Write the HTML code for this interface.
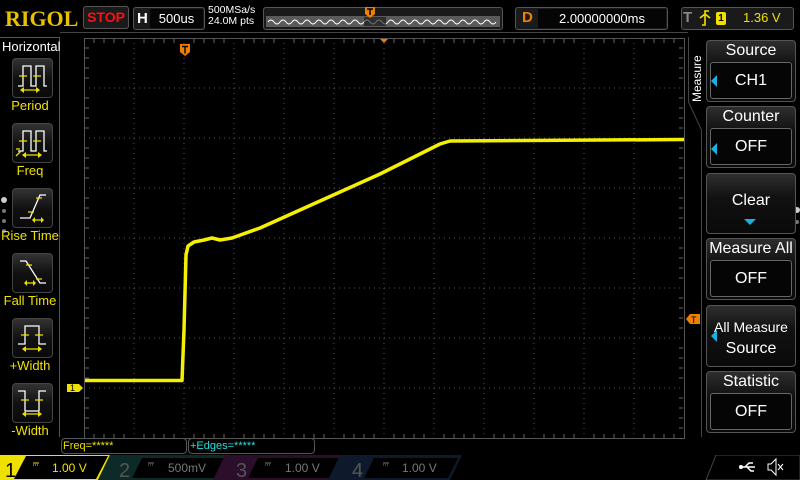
<!DOCTYPE html>
<html><head><meta charset="utf-8"><style>
*{margin:0;padding:0;box-sizing:border-box}
body{width:800px;height:480px;background:#000;overflow:hidden;position:relative;font-family:"Liberation Sans",sans-serif;color:#fff}
.a{position:absolute}
.btn{position:absolute;left:706px;width:90px;border:1px solid #555;border-radius:4px;background:linear-gradient(#2e2e2e,#111 40%,#0a0a0a)}
.btn .t{text-align:center;font-size:16px;color:#fff;height:20px;line-height:20px}
.btn .in{position:absolute;left:3px;right:3px;border:1px solid #666;border-radius:3px;background:#050505;text-align:center;font-size:16px;line-height:36px}
.tri{position:absolute;left:4px;width:0;height:0;border-top:6px solid transparent;border-bottom:6px solid transparent;border-right:6px solid #1ab0e0}
.ic{position:absolute;left:12px;width:41px;height:40px;border:1px solid #444;border-radius:4px;background:linear-gradient(#333,#111 50%,#0a0a0a)}
.lb{position:absolute;left:0;width:60px;text-align:center;color:#f0e000;font-size:13px}
</style></head><body>
<!-- top bar -->
<div class="a" style="left:5px;top:6px;font-family:'Liberation Serif',serif;font-weight:bold;font-size:22px;color:#e8c000">RIGOL</div>
<div class="a" style="left:83px;top:6px;width:46px;height:23px;border:1px solid #555;border-radius:3px;background:#1a1a1a;color:#ff1010;font-weight:bold;font-size:14px;text-align:center;line-height:21px">STOP</div>
<div class="a" style="left:133px;top:7px;width:72px;height:23px;border:1px solid #555;border-radius:3px;background:#1a1a1a"></div>
<div class="a" style="left:137px;top:10px;font-weight:bold;font-size:15px">H</div>
<div class="a" style="left:150px;top:9px;width:53px;height:19px;background:#050505;border-radius:2px;font-size:13px;text-align:center;line-height:19px">500us</div>
<div class="a" style="left:208px;top:5px;font-size:10.5px;line-height:11px">500MSa/s<br>24.0M pts</div>
<div class="a" style="left:263px;top:7px;width:240px;height:23px;border:1px solid #555;border-radius:3px;background:#1a1a1a"></div>
<svg class="a" style="left:266px;top:16px" width="234" height="12"><rect width="234" height="11" fill="#5a5a5a"/><path d="M2 6 q3 -4 6 0 t6 0 t6 0 t6 0 t6 0 t6 0 t6 0 t6 0 t6 0 t6 0 t6 0 t6 0 t6 0 t6 0 t6 0 t6 0 t6 0 t6 0 t6 0 t6 0 t6 0 t6 0 t6 0 t6 0 t6 0 t6 0 t6 0 t6 0 t6 0 t6 0 t6 0 t6 0 t6 0 t6 0 t6 0 t6 0 t6 0 t6 0" stroke="#fff" fill="none" stroke-width="1"/><rect x="98" y="1" width="22" height="9" fill="#111" opacity=".6"/></svg>
<svg class="a" style="left:365px;top:7px" width="10" height="11"><path d="M0 0h10v7l-5 4-5-4z" fill="#f08000"/><path d="M2 2h6M5 2v6" stroke="#000" stroke-width="1.5"/></svg>
<div class="a" style="left:515px;top:7px;width:153px;height:23px;border:1px solid #555;border-radius:3px;background:#1a1a1a"></div>
<div class="a" style="left:522px;top:9px;font-weight:bold;font-size:15px;color:#f08000">D</div>
<div class="a" style="left:538px;top:9px;width:128px;height:19px;background:#050505;font-size:13px;text-align:center;line-height:19px">2.00000000ms</div>
<div class="a" style="left:681px;top:7px;width:113px;height:23px;border:1px solid #555;border-radius:3px;background:#1a1a1a"></div>
<div class="a" style="left:683px;top:9px;font-weight:bold;font-size:15px;color:#888">T</div>
<svg class="a" style="left:699px;top:10px" width="12" height="16"><path d="M3 15H6V1H10M1 8l5-4 5 4" stroke="#f0e000" stroke-width="1.6" fill="none"/></svg>
<div class="a" style="left:716px;top:12px;width:10px;height:13px;background:#f0e000;border-radius:2px;color:#000;font-size:10px;text-align:center;line-height:13px;font-weight:bold">1</div>
<div class="a" style="left:743px;top:10px;font-size:13px;color:#f0e000">1.36 V</div>
<!-- frames -->
<div class="a" style="left:0;top:37px;width:60px;height:1px;background:#555"></div>
<div class="a" style="left:59px;top:37px;width:1px;height:400px;background:#555"></div>
<div class="a" style="left:60px;top:32px;width:628px;height:1px;background:#444"></div>
<!-- plot -->
<svg class="a" style="left:0;top:0" width="800" height="480">
<g stroke="#555" stroke-dasharray="1 4">
<path d="M134 38v400M184 38v400M234 38v400M284 38v400M334 38v400M384 38v400M434 38v400M484 38v400M534 38v400M584 38v400M634 38v400"/>
<path d="M84 88h600M84 138h600M84 188h600M84 238h600M84 288h600M84 338h600M84 388h600"/>
</g>
<rect x="84.5" y="38.5" width="600" height="400" fill="none" stroke="#555"/>
<path d="M94 39v4M104 39v4M114 39v4M124 39v4M144 39v4M154 39v4M164 39v4M174 39v4M194 39v4M204 39v4M214 39v4M224 39v4M244 39v4M254 39v4M264 39v4M274 39v4M294 39v4M304 39v4M314 39v4M324 39v4M344 39v4M354 39v4M364 39v4M374 39v4M394 39v4M404 39v4M414 39v4M424 39v4M444 39v4M454 39v4M464 39v4M474 39v4M494 39v4M504 39v4M514 39v4M524 39v4M544 39v4M554 39v4M564 39v4M574 39v4M594 39v4M604 39v4M614 39v4M624 39v4M644 39v4M654 39v4M664 39v4M674 39v4M94 438v-4M104 438v-4M114 438v-4M124 438v-4M144 438v-4M154 438v-4M164 438v-4M174 438v-4M194 438v-4M204 438v-4M214 438v-4M224 438v-4M244 438v-4M254 438v-4M264 438v-4M274 438v-4M294 438v-4M304 438v-4M314 438v-4M324 438v-4M344 438v-4M354 438v-4M364 438v-4M374 438v-4M394 438v-4M404 438v-4M414 438v-4M424 438v-4M444 438v-4M454 438v-4M464 438v-4M474 438v-4M494 438v-4M504 438v-4M514 438v-4M524 438v-4M544 438v-4M554 438v-4M564 438v-4M574 438v-4M594 438v-4M604 438v-4M614 438v-4M624 438v-4M644 438v-4M654 438v-4M664 438v-4M674 438v-4" stroke="#666"/>
<path d="M85 48h4M85 58h4M85 68h4M85 78h4M85 98h4M85 108h4M85 118h4M85 128h4M85 148h4M85 158h4M85 168h4M85 178h4M85 198h4M85 208h4M85 218h4M85 228h4M85 248h4M85 258h4M85 268h4M85 278h4M85 298h4M85 308h4M85 318h4M85 328h4M85 348h4M85 358h4M85 368h4M85 378h4M85 398h4M85 408h4M85 418h4M85 428h4M683 48h-4M683 58h-4M683 68h-4M683 78h-4M683 98h-4M683 108h-4M683 118h-4M683 128h-4M683 148h-4M683 158h-4M683 168h-4M683 178h-4M683 198h-4M683 208h-4M683 218h-4M683 228h-4M683 248h-4M683 258h-4M683 268h-4M683 278h-4M683 298h-4M683 308h-4M683 318h-4M683 328h-4M683 348h-4M683 358h-4M683 368h-4M683 378h-4M683 398h-4M683 408h-4M683 418h-4M683 428h-4" stroke="#666"/>
<!-- waveform -->
<path d="M85 380.5H182L184 330L186 255L188 246L194 242L204 240L212 238L220 240L232 238L260 228L300 210L340 192L380 174L420 154L440 144L450 141L684 139.5" fill="none" stroke="#f4f000" stroke-width="3.5" stroke-linejoin="round"/>
<!-- markers -->
<path d="M180 44h10v8l-5 4-5-4z" fill="#f08000"/><path d="M182 46.5h6M185 46.5v7" stroke="#000" stroke-width="1.4"/>
<path d="M380 39h8l-4 4z" fill="#f08000"/>
<path d="M67 384h12l4 4-4 4h-12z" fill="#f0e000"/><text x="70" y="391" font-size="9" font-family="Liberation Sans" fill="#000">1</text>
<path d="M700 314h-10l-4 5 4 5h10z" fill="#f08000"/><text x="691" y="323" font-size="9" font-family="Liberation Sans" fill="#000">T</text>
<!-- right panel bracket -->
<path d="M688.5 37V102L701.5 130V437" stroke="#444" fill="none"/>
<circle cx="797" cy="210" r="3" fill="#ccc"/><circle cx="797" cy="222" r="2" fill="#777"/>
<circle cx="4" cy="200" r="3" fill="#ccc"/><circle cx="4" cy="211" r="2" fill="#777"/><circle cx="4" cy="221" r="2" fill="#777"/><circle cx="4" cy="231" r="2" fill="#777"/>
</svg>
<div class="a" style="left:2px;top:39px;font-size:13px">Horizontal</div>
<!-- left icons -->
<div class="ic" style="top:58px"></div>
<svg class="a" style="left:12px;top:58px" width="41" height="40"><g stroke="#fff" fill="none" stroke-width="1.3"><path d="M6 28h5V8h8v20h5V8h8v20h3"/></g><g stroke="#f0e000" stroke-width="1.3"><path d="M7 18h8M21 18h8M10 32h16"/></g><path d="M8 32l4-3v6zM28 32l-4-3v6z" fill="#f0e000"/></svg>
<div class="lb" style="top:98px">Period</div>
<div class="ic" style="top:123px"></div>
<svg class="a" style="left:12px;top:123px" width="41" height="40"><g stroke="#fff" fill="none" stroke-width="1.3"><path d="M6 28h5V8h8v20h5V8h8v20h3"/></g><g stroke="#f0e000" stroke-width="1.3"><path d="M7 18h8M21 18h8M12 32h16M4 26h4M4 33l5-5"/></g><path d="M10 32l4-3v6zM30 32l-4-3v6z" fill="#f0e000"/></svg>
<div class="lb" style="top:163px">Freq</div>
<div class="ic" style="top:188px"></div>
<svg class="a" style="left:12px;top:188px" width="41" height="40"><g stroke="#fff" fill="none" stroke-width="1.3"><path d="M8 30h10l10-23h6"/></g><g stroke="#f0e000" stroke-width="1.3"><path d="M16 24h6M24 10h6M22 32h8"/></g><path d="M20 32l3-3v6zM32 32l-3-3v6z" fill="#f0e000"/></svg>
<div class="lb" style="top:228px">Rise Time</div>
<div class="ic" style="top:253px"></div>
<svg class="a" style="left:12px;top:253px" width="41" height="40"><g stroke="#fff" fill="none" stroke-width="1.3"><path d="M8 8h6l14 22h6"/></g><g stroke="#f0e000" stroke-width="1.3"><path d="M14 12h6M24 26h6M14 30h8"/></g><path d="M12 30l3-3v6zM24 30l-3-3v6z" fill="#f0e000"/></svg>
<div class="lb" style="top:293px">Fall Time</div>
<div class="ic" style="top:318px"></div>
<svg class="a" style="left:12px;top:318px" width="41" height="40"><g stroke="#fff" fill="none" stroke-width="1.3"><path d="M6 26h7V8h14v18h7"/></g><g stroke="#f0e000" stroke-width="1.3"><path d="M9 17h8M23 17h8M12 31h16"/></g><path d="M10 31l4-3v6zM30 31l-4-3v6z" fill="#f0e000"/></svg>
<div class="lb" style="top:358px">+Width</div>
<div class="ic" style="top:383px"></div>
<svg class="a" style="left:12px;top:383px" width="41" height="40"><g stroke="#fff" fill="none" stroke-width="1.3"><path d="M6 8h7v20h14V8h7"/></g><g stroke="#f0e000" stroke-width="1.3"><path d="M9 17h8M23 17h8M12 31h16"/></g><path d="M10 31l4-3v6zM30 31l-4-3v6z" fill="#f0e000"/></svg>
<div class="lb" style="top:423px">-Width</div>
<!-- right panel -->
<div class="a" style="left:690px;top:102px;transform:rotate(-90deg);transform-origin:0 0;font-size:12px;width:60px">Measure</div>
<div class="btn" style="top:40px;height:62px"><div class="t">Source</div><div class="in" style="top:21px;height:37px">CH1</div><div class="tri" style="top:34px"></div></div>
<div class="btn" style="top:106px;height:62px"><div class="t">Counter</div><div class="in" style="top:21px;height:37px">OFF</div><div class="tri" style="top:36px"></div></div>
<div class="btn" style="top:173px;height:61px"><div class="t" style="margin-top:17px">Clear</div><div style="position:absolute;left:37px;top:45px;border-left:6px solid transparent;border-right:6px solid transparent;border-top:6px solid #1ab0e0"></div></div>
<div class="btn" style="top:238px;height:62px"><div class="t">Measure All</div><div class="in" style="top:21px;height:37px">OFF</div></div>
<div class="btn" style="top:305px;height:62px"><div class="t" style="margin-top:11px;font-size:14px">All Measure</div><div class="t" style="margin-top:2px">Source</div><div class="tri" style="top:24px"></div></div>
<div class="btn" style="top:371px;height:62px"><div class="t">Statistic</div><div class="in" style="top:21px;height:37px">OFF</div></div>
<!-- measurement row -->
<div class="a" style="left:61px;top:438px;width:126px;height:16px;border:1px solid #555;border-radius:4px;color:#f0e000;font-size:11px;padding-left:1px;line-height:14px">Freq=*****</div>
<div class="a" style="left:188px;top:438px;width:127px;height:16px;border:1px solid #555;border-radius:4px;color:#20e0e0;font-size:11px;padding-left:1px;line-height:14px">+Edges=*****</div>
<!-- channel row -->
<svg class="a" style="left:0;top:455px" width="800" height="25">
<path d="M0 0H110L98 25H0z" fill="#f0e000"/>
<path d="M26 1H108L96 24H14z" fill="#000"/>
<path d="M110 0H230L218 25H98z" fill="#0e2a28"/><path d="M142 3H226L216 23H132z" fill="#000"/>
<path d="M225 0H345L333 25H213z" fill="#2a0e2a"/><path d="M258 3H341L331 23H248z" fill="#000"/>
<path d="M340 0H462L450 25H328z" fill="#0e1a2c"/><path d="M374 3H458L448 23H364z" fill="#000"/>
<path d="M716 0H800V25H706z" fill="none" stroke="#444"/>
<g font-family="Liberation Sans" font-size="20"><text x="5" y="22" fill="#000">1</text><text x="119" y="22" fill="#555">2</text><text x="236" y="22" fill="#555">3</text><text x="352" y="22" fill="#555">4</text></g>
<g font-family="Liberation Sans" font-size="12"><text x="52" y="17" fill="#f0e000">1.00 V</text><text x="168" y="17" fill="#777">500mV</text><text x="285" y="17" fill="#777">1.00 V</text><text x="402" y="17" fill="#777">1.00 V</text></g>
<g stroke-width="1"><path d="M33 8h6M33 10h1M35 10h1M37 10h1" stroke="#f0e000"/><path d="M148 8h6M148 10h1M150 10h1M152 10h1" stroke="#777"/><path d="M265 8h6M265 10h1M267 10h1M269 10h1" stroke="#777"/><path d="M383 8h6M383 10h1M385 10h1M387 10h1" stroke="#777"/></g>
<path d="M741 12h14M745 12l4-4h4M747 12l4 4h3" stroke="#fff" fill="none" stroke-width="1.5"/><circle cx="741" cy="12" r="2" fill="#fff"/>
<path d="M768 9h3l5-5v16l-5-5h-3z" fill="none" stroke="#fff"/><path d="M778 9l5 6M783 9l-5 6" stroke="#fff"/>
</svg>
</body></html>
